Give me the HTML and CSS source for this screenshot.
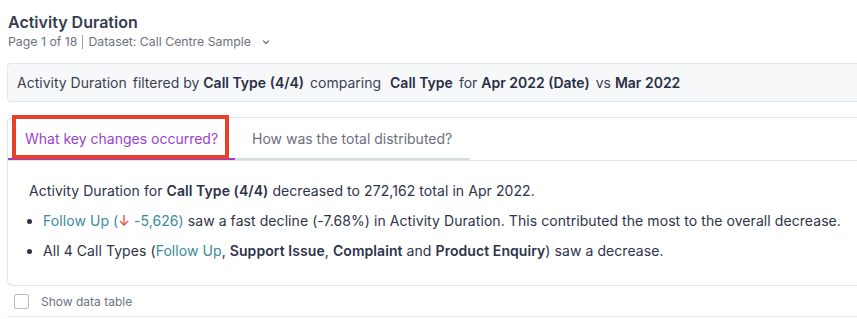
FILE: index.html
```html
<!DOCTYPE html>
<html lang="en">
<head>
  <meta charset="UTF-8">
  <title>Activity Duration</title>
  <link rel="stylesheet" href="styles.css">
</head>
<body>

  <div class="header">
    <h1>Activity Duration</h1>
    <div class="meta">
      <span>Page 1 of 18</span>
      <span class="divider"></span>
      <span>Dataset: Call Centre Sample</span>
      <svg class="chevron" width="10" height="10" viewBox="0 0 10 10"><path d="M2.5 4 L5 6.5 L7.5 4" fill="none" stroke="#6b7280" stroke-width="1.2" stroke-linecap="round" stroke-linejoin="round"/></svg>
    </div>
  </div>

  <div class="filter-bar">
    <span>Activity Duration</span>
    <span>filtered by <b>Call Type (4/4)</b></span>
    <span>comparing</span>
    <span><b>Call Type</b></span>
    <span>for <b>Apr 2022 (Date)</b></span>
    <span>vs <b>Mar 2022</b></span>
  </div>

  <div class="card">
    <div class="tabs">
      <div class="tab active">What key changes occurred?</div>
      <div class="tab second">How was the total distributed?</div>
    </div>
    <div class="insights">
      <p>Activity Duration for <b>Call Type (4/4)</b> decreased to 272,162 total in Apr 2022.</p>
      <ul>
        <li><span class="link">Follow Up (<span class="down">&#8595;</span> -5,626)</span> saw a fast decline (-7.68%) in Activity Duration. This contributed the most to the overall decrease.</li>
        <li>All 4 Call Types (<span class="link">Follow Up</span>, <b>Support Issue</b>, <b>Complaint</b> and <b>Product Enquiry</b>) saw a decrease.</li>
      </ul>
    </div>
  </div>

  <label class="data-toggle">
    <span class="box"></span>
    Show data table
  </label>

</body>
</html>
```

FILE: styles.css
```css
body {
  margin: 0;
  padding: 12px 0 0 8px;
  font-family: Inter, "Noto Sans", sans-serif;
  color: #2e3349;
  background: #fff;
  overflow: hidden;
}
.header h1 {
  margin: 0;
  font-size: 16px;
  font-weight: 600;
  line-height: 20px;
  color: #353c4e;
}
.meta {
  display: flex;
  align-items: center;
  gap: 5px;
  margin-top: 2px;
  font-size: 12.3px;
  line-height: 16px;
  color: #6b7280;
}
.divider {
  width: 1px;
  height: 14px;
  background: #9ca3af;
}
.chevron {
  margin-left: 5px;
}
.filter-bar {
  display: flex;
  gap: 6px;
  margin: 13px 0 0 -1px;
  height: 39px;
  box-sizing: border-box;
  padding: 0 9px;
  align-items: center;
  background: #f7f8fa;
  border: 1px solid #e3e6eb;
  border-right: none;
  border-radius: 4px 0 0 4px;
  font-size: 14px;
  color: #3a3f52;
}
.filter-bar b {
  font-weight: 600;
  color: #2a2f45;
}
.filter-bar span:nth-child(4) {
  margin-left: 3px;
}
.card {
  margin: 15px 0 0 -1px;
  height: 169px;
  box-sizing: border-box;
  border: 1px solid #e1e4ea;
  border-right: none;
  border-radius: 6px 0 0 6px;
}
.tabs {
  display: flex;
  height: 42px;
  border-bottom: 1px solid #e1e4ea;
}
.tab {
  padding: 0 17px;
  display: flex;
  align-items: center;
  font-size: 14px;
  white-space: nowrap;
  color: #6b6f7e;
  position: relative;
}
.tab.active {
  color: #9b3fc9;
  width: 227px;
  box-sizing: border-box;
  border-bottom: 2px solid #9b3fc9;
}
.tab.active::after {
  content: "";
  position: absolute;
  left: 4px;
  top: -3px;
  width: 217px;
  height: 44px;
  box-sizing: border-box;
  border: 4px solid #e8412b;
}
.tab.second {
  width: 235px;
  box-sizing: border-box;
  border-bottom: 2px solid #d7dbe2;
}
.insights {
  padding: 20px 0 0 21px;
  font-size: 14px;
  letter-spacing: 0.07px;
  white-space: nowrap;
  color: #2e3349;
}
.insights p {
  margin: 0 0 10px;
  line-height: 20px;
}
.insights b {
  font-weight: 600;
}
.insights ul {
  margin: 0;
  padding-left: 14px;
}
.insights li {
  line-height: 20px;
  margin-bottom: 10px;
}
.link {
  color: #3b8c9c;
}
.down {
  color: #e53b2f;
}
.data-toggle {
  display: flex;
  align-items: center;
  gap: 12px;
  height: 30px;
  padding-left: 7px;
  margin-left: -1px;
  border-bottom: 1px solid #e5e7eb;
  font-size: 12px;
  color: #6b7280;
}
.box {
  width: 13px;
  height: 13px;
  border: 1px solid #b8bdc6;
  border-radius: 2px;
}
```
